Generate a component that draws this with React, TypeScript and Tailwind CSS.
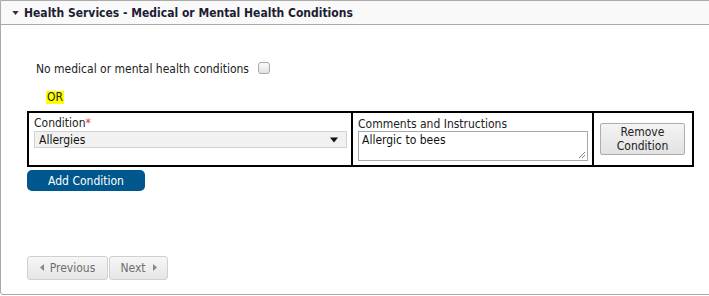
import React from "react";

const FONT = "font-['DejaVu_Sans_Condensed','Open_Sans',sans-serif]";

// ─── Small drawings ───────────────────────────────────────────────────────────

function CaretDown({ className = "" }: { className?: string }) {
  return (
    <svg viewBox="0 0 8 5" className={className} aria-hidden>
      <path d="M0 0h8L4 5z" fill="currentColor" />
    </svg>
  );
}

function CaretSide({ dir, className = "" }: { dir: "left" | "right"; className?: string }) {
  return (
    <svg viewBox="0 0 4 7" className={className} aria-hidden>
      <path d={dir === "left" ? "M4 0v7L0 3.5z" : "M0 0v7l4-3.5z"} fill="currentColor" />
    </svg>
  );
}

// ─── Condition row ────────────────────────────────────────────────────────────

function ConditionRow() {
  return (
    <div className="grid grid-cols-[322px_241px_96px] border-2 border-black w-[667px] h-[56px]">
      <div className="pl-[5px] pr-[4px] pt-[3px]">
        <div className="text-[12px] leading-[15px] text-[#222]">
          Condition<span className="text-[#e33]">*</span>
        </div>
        <div className="h-[17px] bg-[#f1f1f1] border border-[#d2d2d2] flex items-center justify-between pl-[4px] pr-[8px]">
          <span className="text-[12px] leading-none text-[#111]">Allergies</span>
          <CaretDown className="w-[8px] h-[6px] text-[#111]" />
        </div>
      </div>
      <div className="border-l-2 border-black pl-[5px] pr-[4px] pt-[4px]">
        <div className="text-[12px] leading-[14px] text-[#222]">Comments and Instructions</div>
        <div className="relative h-[30px] border border-[#a9a9a9] px-[3px] py-[1px] text-[12px] leading-[15px] text-[#111]">
          Allergic to bees
          <svg viewBox="0 0 8 8" className="absolute right-[1px] bottom-[1px] w-[8px] h-[8px] text-[#888]" aria-hidden>
            <path d="M7 1L1 7M7 4L4 7" stroke="currentColor" strokeWidth="1" />
          </svg>
        </div>
      </div>
      <div className="border-l-2 border-black flex items-center pl-[6px]">
        <button className="w-[85px] h-[32px] rounded-[2px] border border-[#adadad] bg-gradient-to-b from-[#f4f4f4] to-[#e2e2e2] text-[12px] leading-[14px] text-[#222]">
          Remove
          <br />
          Condition
        </button>
      </div>
    </div>
  );
}

// ─── Page ─────────────────────────────────────────────────────────────────────

export default function App() {
  return (
    <div className={`w-[709px] h-[296px] overflow-hidden bg-white ${FONT}`}>
      <div className="w-[716px] h-[295px] border border-[#aaa] rounded-bl-[3px] flex flex-col">
        <div className="h-[24px] shrink-0 bg-[#f9f9f9] border-b border-[#aaa] flex items-center pl-[11px] gap-[5px]">
          <CaretDown className="w-[7px] h-[4px] text-[#333]" />
          <span className="text-[12px] font-bold text-[#1d1d33]">
            Health Services - Medical or Mental Health Conditions
          </span>
        </div>

        <div className="pl-[26px] pt-[37px]">
          <div className="flex items-center pl-[9px] h-[14px]">
            <span className="text-[12px] text-[#222]">No medical or mental health conditions</span>
            <span className="ml-[9px] -mt-[3px] w-[12px] h-[12px] rounded-[3px] border border-[#a8a8a8] bg-gradient-to-b from-[#fbfbfb] to-[#e4e4e4]" />
          </div>

          <div className="pl-[19px] mt-[15px] h-[13px] flex">
            <span className="bg-[#ffff00] text-[12px] leading-[13px] text-[#222] px-px">OR</span>
          </div>

          <div className="mt-[7px]">
            <ConditionRow />
          </div>

          <button className="mt-[3px] w-[118px] h-[21px] rounded-[5px] bg-[#00578d] text-white text-[12px]">
            Add Condition
          </button>

          <div className="mt-[64px] flex gap-[1px]">
            <button className="w-[81px] h-[24px] rounded-[3px] border border-[#d0d0d0] bg-gradient-to-b from-[#f6f6f6] to-[#e6e6e6] text-[12px] text-[#6e6e6e] flex items-center justify-center gap-[6px]">
              <CaretSide dir="left" className="w-[4px] h-[7px] text-[#888]" />
              Previous
            </button>
            <button className="w-[59px] h-[24px] rounded-[3px] border border-[#d0d0d0] bg-gradient-to-b from-[#f6f6f6] to-[#e6e6e6] text-[12px] text-[#6e6e6e] flex items-center justify-center gap-[7px]">
              Next
              <CaretSide dir="right" className="w-[4px] h-[7px] text-[#888]" />
            </button>
          </div>
        </div>
      </div>
    </div>
  );
}
